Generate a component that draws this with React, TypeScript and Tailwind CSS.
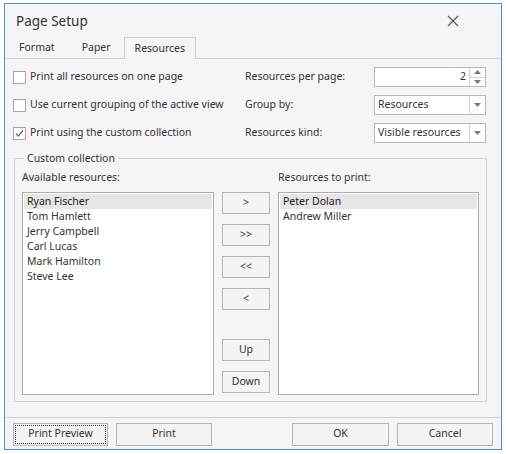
import React from 'react'

const font = { fontFamily: '"Noto Sans", "Open Sans", sans-serif' }

function Checkbox({ checked, label }: { checked?: boolean; label: string }) {
  return (
    <label className="flex items-center h-[20px] gap-[4px]">
      <span className="w-[13px] h-[13px] border border-[#a6a6a6] bg-white flex items-center justify-center">
        {checked && (
          <svg width="11" height="11" viewBox="0 0 11 11">
            <path d="M2 5.5 L4.3 8 L9 2.5" fill="none" stroke="#6b6b6b" strokeWidth="1.2" />
          </svg>
        )}
      </span>
      <span>{label}</span>
    </label>
  )
}

function Combo({ value }: { value: string }) {
  return (
    <div className="w-[112px] h-[20px] border border-[#b9b9b9] bg-white flex">
      <div className="flex-1 pl-[3px] flex items-center">{value}</div>
      <div className="w-[16px] border-l border-[#d4d4d4] flex items-center justify-center">
        <svg width="7" height="4" viewBox="0 0 7 4">
          <path d="M0 0 H7 L3.5 4 Z" fill="#7a7a7a" />
        </svg>
      </div>
    </div>
  )
}

function Spin({ value }: { value: string }) {
  return (
    <div className="w-[112px] h-[20px] border border-[#b9b9b9] bg-white flex">
      <div className="flex-1 pr-[3px] flex items-center justify-end">{value}</div>
      <div className="w-[16px] border-l border-[#d4d4d4] flex flex-col">
        <div className="flex-1 flex items-center justify-center border-b border-[#d4d4d4]">
          <svg width="7" height="4" viewBox="0 0 7 4">
            <path d="M0 4 H7 L3.5 0 Z" fill="#7a7a7a" />
          </svg>
        </div>
        <div className="flex-1 flex items-center justify-center">
          <svg width="7" height="4" viewBox="0 0 7 4">
            <path d="M0 0 H7 L3.5 4 Z" fill="#7a7a7a" />
          </svg>
        </div>
      </div>
    </div>
  )
}

function Btn({ children, className = '' }: { children: React.ReactNode; className?: string }) {
  return (
    <button className={`h-[22px] border border-[#b4b4b4] bg-[#f4f4f4] text-[#333] flex items-center justify-center ${className}`}>
      {children}
    </button>
  )
}

function ListBox({ items }: { items: string[] }) {
  return (
    <div className="h-[203px] border border-[#acacac] bg-white p-[1px]">
      {items.map((item, i) => (
        <div
          key={item}
          className={`h-[15px] pl-[3px] flex items-center ${i === 0 ? 'bg-[#e6e6e6] text-[#222]' : ''}`}
        >
          {item}
        </div>
      ))}
    </div>
  )
}

export default function App() {
  return (
    <div className="w-[506px] h-[454px] bg-white pl-[4px] pt-[3px] text-[10.5px] text-[#333]" style={font}>
      <div className="w-[498px] h-[447px] border border-[#4a8fd1] bg-[#f5f5f5] flex flex-col">
        {/* Title bar */}
        <div className="h-[33px] flex items-center justify-between pl-[11px] pr-[42px] pt-[1px]">
          <span className="text-[13.5px] text-[#333]">Page Setup</span>
          <svg width="12" height="12" viewBox="0 0 12 12">
            <path d="M1 1 L11 11 M11 1 L1 11" stroke="#555" strokeWidth="1.1" />
          </svg>
        </div>

        {/* Tabs */}
        <div className="h-[21px] flex items-end">
          <div className="h-[20px] px-[14px] flex items-center">Format</div>
          <div className="h-[20px] px-[13px] flex items-center">Paper</div>
          <div className="h-[22px] px-[10px] flex items-center border border-b-0 border-[#cfcfcf] bg-[#f5f5f5] -mb-[1px] relative">
            Resources
          </div>
        </div>

        {/* Tab panel */}
        <div className="flex-1 border-t border-[#cfcfcf] pt-[8px] px-[8px]">
          <div className="grid grid-cols-[232px_129px_112px] gap-y-[8px] items-center">
            <Checkbox label="Print all resources on one page" />
            <span>Resources per page:</span>
            <Spin value="2" />
            <Checkbox label="Use current grouping of the active view" />
            <span>Group by:</span>
            <Combo value="Resources" />
            <Checkbox checked label="Print using the custom collection" />
            <span>Resources kind:</span>
            <Combo value="Visible resources" />
          </div>

          <fieldset className="mt-[8px] ml-[1px] w-[472px] border border-[#d3d3d3] px-[7px] pb-[6px]">
            <legend className="ml-[2px] px-[3px] leading-[14px]">Custom collection</legend>
            <div className="flex gap-[8px] pt-[6px]">
              <div className="w-[192px]">
                <div className="h-[14px] flex items-center mb-[7px]">Available resources:</div>
                <ListBox items={['Ryan Fischer', 'Tom Hamlett', 'Jerry Campbell', 'Carl Lucas', 'Mark Hamilton', 'Steve Lee']} />
              </div>
              <div className="w-[48px] flex flex-col pt-[21px] gap-[10px]">
                <Btn className="w-[48px]">&gt;</Btn>
                <Btn className="w-[48px]">&gt;&gt;</Btn>
                <Btn className="w-[48px]">&lt;&lt;</Btn>
                <Btn className="w-[48px]">&lt;</Btn>
                <Btn className="w-[48px] mt-auto">Up</Btn>
                <Btn className="w-[48px] mb-[2px]">Down</Btn>
              </div>
              <div className="w-[201px]">
                <div className="h-[14px] flex items-center mb-[7px]">Resources to print:</div>
                <ListBox items={['Peter Dolan', 'Andrew Miller']} />
              </div>
            </div>
          </fieldset>
        </div>

        {/* Footer */}
        <div className="h-[32px] border-t border-[#cfcfcf] flex items-center px-[8px] pt-[1px]">
          <Btn className="w-[95px] h-[23px] outline outline-1 outline-dotted outline-[#333] -outline-offset-[3px]">
            Print Preview
          </Btn>
          <Btn className="w-[96px] h-[23px] ml-[8px]">Print</Btn>
          <Btn className="w-[97px] h-[23px] ml-auto">OK</Btn>
          <Btn className="w-[96px] h-[23px] ml-[8px]">Cancel</Btn>
        </div>
      </div>
    </div>
  )
}
